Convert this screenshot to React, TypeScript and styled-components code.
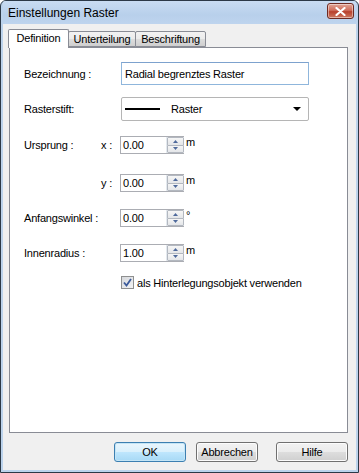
import React, { FC, ReactNode } from 'react';
import styled, { createGlobalStyle } from 'styled-components';

const GlobalStyle = createGlobalStyle`
  html, body {
    margin: 0;
    padding: 0;
    background: #ffffff;
  }
  body {
    font-family: 'Liberation Sans', Arial, sans-serif;
    font-size: 11px;
    letter-spacing: -0.2px;
    color: #000;
  }
`;

const Window = styled.div`
  width: 359px;
  height: 473px;
  box-sizing: border-box;
  border: 1px solid #2c3947;
  border-radius: 6px 6px 0 0;
  background: #bcd3ec;
  display: flex;
  flex-direction: column;
  padding: 0 2px 2px 2px;
  overflow: hidden;
`;

const TitleBar = styled.div`
  height: 23px;
  flex: none;
  display: flex;
  align-items: center;
  justify-content: space-between;
  padding: 0 2px 0 5px;
  background: linear-gradient(#c9dcf2, #b8d0eb 60%, #bed4ee);
  font-size: 12px;
  letter-spacing: 0;
`;

const CloseButton = styled.div`
  width: 25px;
  height: 14px;
  margin-top: -3px;
  border: 1px solid #6e2a22;
  border-radius: 3px;
  background: linear-gradient(#e0a597, #cf6e5c 45%, #b8402c 55%, #cd7a62);
  display: flex;
  align-items: center;
  justify-content: center;
  box-shadow: inset 0 0 0 1px rgba(255, 255, 255, 0.45);
`;

const Client = styled.div`
  flex: 1;
  display: flex;
  flex-direction: column;
  background: #f0f0f0;
  padding: 5px 8px 0 5px;
`;

const TabStrip = styled.div`
  display: flex;
  align-items: flex-end;
  height: 18px;
  position: relative;
  z-index: 1;
`;

const Tab = styled.div<{ $active?: boolean; $w: number }>`
  box-sizing: border-box;
  width: ${(p) => p.$w}px;
  height: ${(p) => (p.$active ? 19 : 16)}px;
  margin-bottom: ${(p) => (p.$active ? -1 : 0)}px;
  border: 1px solid #898c95;
  border-bottom: ${(p) => (p.$active ? 'none' : '1px solid #898c95')};
  border-radius: 2px 2px 0 0;
  background: ${(p) =>
    p.$active ? '#ffffff' : 'linear-gradient(#f2f2f2, #ebebeb 50%, #dddddd 51%, #cfcfcf)'};
  display: flex;
  align-items: center;
  justify-content: center;
  padding-bottom: ${(p) => (p.$active ? 2 : 0)}px;
  & + & {
    margin-left: -1px;
  }
`;

const Panel = styled.div`
  flex: 1;
  margin-left: 1px;
  border: 1px solid #898c95;
  background: #ffffff;
  padding: 14px 0 0 14px;
  display: flex;
  flex-direction: column;
`;

const Row = styled.div<{ $top: number; $h: number }>`
  display: flex;
  align-items: center;
  margin-top: ${(p) => p.$top}px;
  height: ${(p) => p.$h}px;
`;

const Label = styled.div`
  width: 96px;
  flex: none;
  display: flex;
  justify-content: space-between;
  padding-right: 8px;
  box-sizing: border-box;
`;

const TextBox = styled.div`
  box-sizing: border-box;
  width: 188px;
  height: 23px;
  margin-left: 1px;
  border: 1px solid #8fb6dc;
  border-top-color: #7da2ce;
  display: flex;
  align-items: center;
  padding-left: 3px;
`;

const Combo = styled.div`
  box-sizing: border-box;
  width: 188px;
  height: 24px;
  margin-left: 1px;
  border: 1px solid #b5b5b5;
  border-radius: 2px;
  display: flex;
  align-items: center;
  padding: 0 7px 0 3px;
`;

const PenLine = styled.div`
  width: 35px;
  height: 2px;
  background: #000;
  margin-right: 11px;
`;

const ComboText = styled.span`
  flex: 1;
`;

const Arrow = styled.div`
  width: 0;
  height: 0;
  border-left: 4px solid transparent;
  border-right: 4px solid transparent;
  border-top: 4px solid #000;
`;

const SpinBox = styled.div`
  box-sizing: border-box;
  width: 64px;
  height: 18px;
  border: 1px solid #abadb3;
  border-right: none;
  display: flex;
  align-items: stretch;
`;

const SpinValue = styled.div`
  flex: 1;
  display: flex;
  align-items: center;
  padding-left: 2px;
  border-right: 1px solid #e3e9ef;
`;

const SpinButtons = styled.div`
  width: 17px;
  display: flex;
  flex-direction: column;
`;

const SpinButton = styled.div`
  flex: 1;
  box-sizing: border-box;
  border: 1px solid #b3b8c0;
  border-radius: 1px;
  background: linear-gradient(#f6f6f6, #e4e6e9);
  display: flex;
  align-items: center;
  justify-content: center;
  & + & {
    margin-top: -1px;
  }
`;

const Unit = styled.span`
  align-self: flex-start;
  margin-left: 2px;
  margin-top: 0px;
`;

const CheckRow = styled.div`
  display: flex;
  align-items: center;
  margin-top: 14px;
  padding-left: 97px;
  gap: 3px;
`;

const CheckBox = styled.div`
  box-sizing: border-box;
  width: 13px;
  height: 13px;
  border: 1px solid #8e8f8f;
  background: linear-gradient(135deg, #d6d8dc, #f2f3f4);
  display: flex;
  align-items: center;
  justify-content: center;
`;

const ButtonRow = styled.div`
  display: flex;
  justify-content: flex-end;
  padding: 9px 0 8px 0;
`;

const Button = styled.div<{ $w: number; $ml: number; $default?: boolean }>`
  box-sizing: border-box;
  width: ${(p) => p.$w}px;
  height: 20px;
  margin-left: ${(p) => p.$ml}px;
  border: 1px solid ${(p) => (p.$default ? '#3c7fb1' : '#707070')};
  border-radius: 3px;
  background: ${(p) =>
    p.$default
      ? 'linear-gradient(#eaf6fd, #d9f0fc 50%, #bee6fd 51%, #a7d9f5)'
      : 'linear-gradient(#f2f2f2, #ebebeb 50%, #dddddd 51%, #cfcfcf)'};
  box-shadow: inset 0 0 0 1px ${(p) => (p.$default ? '#c4e5f6' : '#fcfcfc')};
  display: flex;
  align-items: center;
  justify-content: center;
`;

const SpinArrow: FC<{ up?: boolean }> = ({ up }) => (
  <svg width="5" height="3" viewBox="0 0 5 3">
    <path d={up ? 'M0 3 L2.5 0 L5 3 Z' : 'M0 0 L2.5 3 L5 0 Z'} fill="#4f6a9c" />
  </svg>
);

const Spin: FC<{ value: string; unit?: string }> = ({ value, unit }) => (
  <>
    <SpinBox>
      <SpinValue>{value}</SpinValue>
      <SpinButtons>
        <SpinButton>
          <SpinArrow up />
        </SpinButton>
        <SpinButton>
          <SpinArrow />
        </SpinButton>
      </SpinButtons>
    </SpinBox>
    {unit && <Unit>{unit}</Unit>}
  </>
);

const FieldLabel: FC<{ text: string; sub?: ReactNode }> = ({ text, sub }) => (
  <Label>
    <span>{text}</span>
    {sub && <span>{sub}</span>}
  </Label>
);

const App: FC = () => (
  <>
    <GlobalStyle />
    <Window>
      <TitleBar>
        <span>Einstellungen Raster</span>
        <CloseButton>
          <svg width="11" height="9" viewBox="0 0 11 9">
            <path d="M1.5 1 L9.5 8 M9.5 1 L1.5 8" stroke="#fff" strokeWidth="2.2" strokeLinecap="round" />
          </svg>
        </CloseButton>
      </TitleBar>
      <Client>
        <TabStrip>
          <Tab $active $w={61}>Definition</Tab>
          <Tab $w={68}>Unterteilung</Tab>
          <Tab $w={71}>Beschriftung</Tab>
        </TabStrip>
        <Panel>
          <Row $top={0} $h={23}>
            <FieldLabel text="Bezeichnung :" />
            <TextBox>Radial begrenztes Raster</TextBox>
          </Row>
          <Row $top={12} $h={24}>
            <FieldLabel text="Rasterstift:" />
            <Combo>
              <PenLine />
              <ComboText>Raster</ComboText>
              <Arrow />
            </Combo>
          </Row>
          <Row $top={15} $h={18}>
            <FieldLabel text="Ursprung :" sub="x :" />
            <Spin value="0.00" unit="m" />
          </Row>
          <Row $top={20} $h={18}>
            <FieldLabel text="" sub="y :" />
            <Spin value="0.00" unit="m" />
          </Row>
          <Row $top={17} $h={18}>
            <FieldLabel text="Anfangswinkel :" />
            <Spin value="0.00" unit="°" />
          </Row>
          <Row $top={17} $h={18}>
            <FieldLabel text="Innenradius :" />
            <Spin value="1.00" unit="m" />
          </Row>
          <CheckRow>
            <CheckBox>
              <svg width="9" height="9" viewBox="0 0 9 9">
                <path d="M1 4.5 L3.5 7.5 L8 1" stroke="#3b5a9a" strokeWidth="1.8" fill="none" />
              </svg>
            </CheckBox>
            <span>als Hinterlegungsobjekt verwenden</span>
          </CheckRow>
        </Panel>
        <ButtonRow>
          <Button $default $w={72} $ml={0}>OK</Button>
          <Button $w={62} $ml={10}>Abbrechen</Button>
          <Button $w={72} $ml={18}>Hilfe</Button>
        </ButtonRow>
      </Client>
    </Window>
  </>
);

export default App;
